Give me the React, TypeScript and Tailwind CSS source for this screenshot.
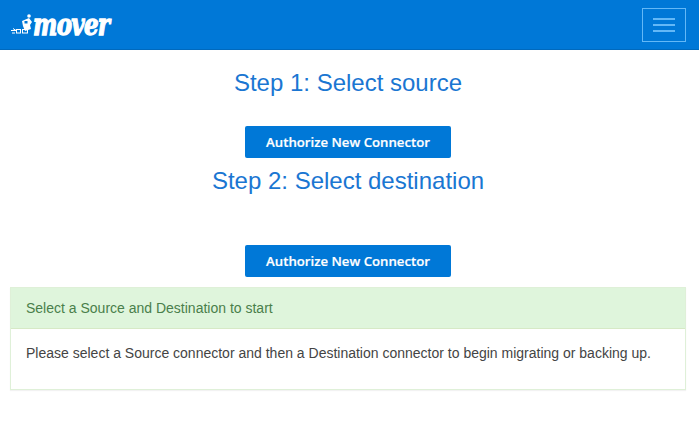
import React from 'react';

function Logo() {
  return (
    <div className="flex items-center">
      <svg width="26" height="28" viewBox="0 0 26 28" className="shrink-0">
        <path d="M1 19.500h5M2 22h3M3 17.500l3 2" stroke="#fff" strokeWidth="1" fill="none" />
        <rect x="6.500" y="18.500" width="4" height="3.500" fill="none" stroke="#fff" strokeWidth="1" />
        <rect x="12.500" y="18.500" width="5" height="3.500" fill="none" stroke="#fff" strokeWidth="1" />
        <circle cx="19" cy="5" r="1.800" fill="#fff" />
        <path d="M12 10l7-3 3 4-2 3 1 4-6 2-2-5z" fill="#fff" />
        <rect x="14.500" y="10" width="3" height="2.500" fill="#0078d7" />
      </svg>
      <span className="-ml-[3px] -mt-[2px] inline-block origin-center scale-y-[1.3] font-['DejaVu_Serif',serif] text-[23px] font-bold italic leading-none tracking-[-0.7px] text-white [-webkit-text-stroke:1px_white]">
        mover
      </span>
    </div>
  );
}

function ConnectorButton() {
  return (
    <button className="h-8 w-[206px] rounded-[2px] bg-[#0078d7] pt-[1px] font-['Open_Sans',sans-serif] text-[13.2px] font-semibold text-white [-webkit-text-stroke:0.2px_white]">
      Authorize New Connector
    </button>
  );
}

export default function App() {
  return (
    <div className="min-h-[439px] bg-white font-['Liberation_Sans',sans-serif]">
      <nav className="flex h-[50px] items-center justify-between border-b border-[#0069bd] bg-[#0078d7] pl-[10px] pr-[13px]">
        <Logo />
        <button className="flex h-[34px] w-11 flex-col items-center justify-center gap-[4px] border border-[#63b8f7]">
          <span className="h-[2px] w-[22px] bg-[#63b8f7]" />
          <span className="h-[2px] w-[22px] bg-[#63b8f7]" />
          <span className="h-[2px] w-[22px] bg-[#63b8f7]" />
        </button>
      </nav>

      <main className="pl-[10px] pr-[13px]">
        <div className="flex flex-col items-center">
          <h3 className="mt-5 text-2xl leading-[26px] text-[#1a76d2]">Step 1: Select source</h3>
          <div className="mt-[30px]">
            <ConnectorButton />
          </div>
          <h3 className="mt-[10px] text-2xl leading-[26px] text-[#1a76d2]">Step 2: Select destination</h3>
          <div className="mt-[51px]">
            <ConnectorButton />
          </div>
        </div>

        <section className="mt-[10px] border border-[#dff0d8] shadow-[0_1px_1px_rgba(0,0,0,0.05)]">
          <div className="flex h-[41px] items-center border-b border-[#d6e9c6] bg-[#dff5dc] px-[15px] text-sm text-[#4a7f4b]">
            Select a Source and Destination to start
          </div>
          <div className="h-[60px] px-[15px] pt-[14px] text-sm leading-5 text-[#444]">
            Please select a Source connector and then a Destination connector to begin migrating or backing up.
          </div>
        </section>
      </main>
    </div>
  );
}
